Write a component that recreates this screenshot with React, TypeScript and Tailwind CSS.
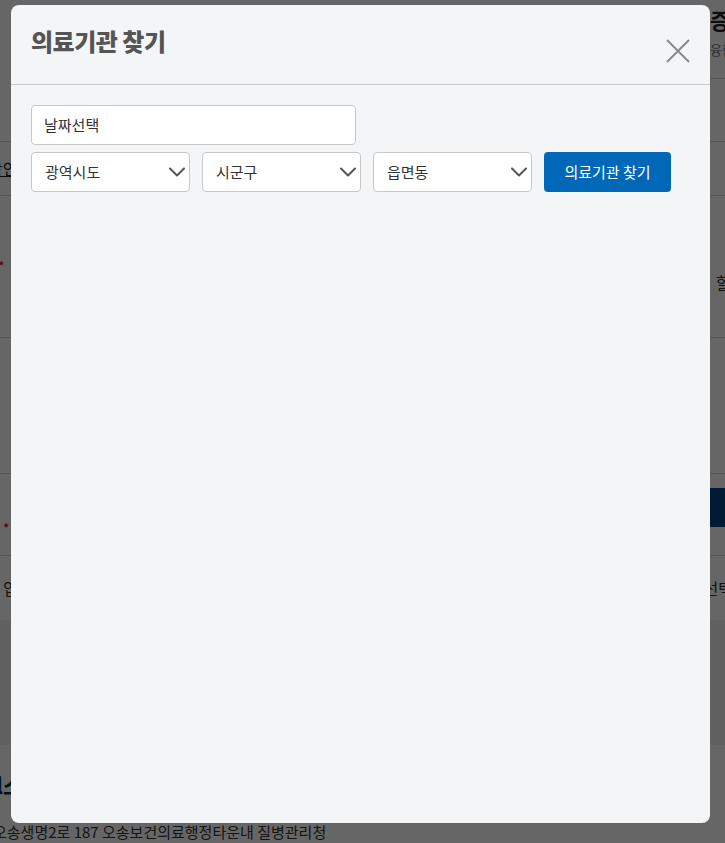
import React from 'react';

const FONT = "font-['Noto_Sans_CJK_KR','Noto_Sans',sans-serif]";

function Chevron() {
  return (
    <svg width="18" height="18" viewBox="0 0 18 18" className="shrink-0">
      <polyline points="2,5.5 9,12.5 16,5.5" fill="none" stroke="#555" strokeWidth="2" strokeLinecap="round" strokeLinejoin="round" />
    </svg>
  );
}

function Select({ label }: { label: string }) {
  return (
    <div className="w-[159px] h-10 flex items-center justify-between pl-[13px] pr-[3px] bg-white border border-[#c8c8c8] rounded-[4px] text-[15px] text-[#333]">
      <span>{label}</span>
      <Chevron />
    </div>
  );
}

/** Page behind the dimmed overlay — only its edges show */
function BackgroundPage() {
  return (
    <div className="w-full h-[843px] flex flex-col bg-white overflow-hidden">
      <div className="h-[142px] border-b border-[#d6d6d6] flex justify-end">
        <div className="flex flex-col items-start w-[15px] overflow-hidden pt-[8px]">
          <span className="text-[22px] font-bold text-[#222] leading-none whitespace-nowrap">증명</span>
          <span className="text-[13px] text-[#777] mt-[10px] whitespace-nowrap">융합</span>
          <div className="w-full border-b border-[#d6d6d6] mt-[18px]" />
        </div>
      </div>
      <div className="h-[54px] border-b border-[#d6d6d6] flex items-center">
        <span className="ml-[-12px] text-[16px] text-[#222] underline">확인</span>
      </div>
      <div className="h-[142px] border-b border-[#d6d6d6] flex justify-between overflow-hidden">
        <span className="text-[14px] text-[#d01] ml-[-2px] mt-[60px]">*</span>
        <span className="text-[17px] text-[#333] mr-[-22px] mt-[74px] whitespace-nowrap">할인</span>
      </div>
      <div className="h-[136px] border-b border-[#d6d6d6]" />
      <div className="h-[82px] border-b border-[#d6d6d6] flex justify-between">
        <span className="text-[14px] text-[#d01] ml-[3px] mt-[44px]">*</span>
        <div className="w-[20px] h-[39px] mt-[14px] bg-[#00447f]" />
      </div>
      <div className="h-[64px] flex justify-between items-center">
        <span className="text-[16px] text-[#333] ml-[-5px]">. 입</span>
        <span className="text-[16px] text-[#333] mr-[-8px]">선택</span>
      </div>
      <div className="h-[125px] bg-[#f2f2f2]" />
      <div className="flex-1 flex flex-col">
        <span className="text-[22px] font-bold text-[#0b2a4a] ml-[-4px] mt-[28px] leading-none">l소</span>
        <span className="text-[15px] text-[#333] ml-[-7px] mt-[26px] whitespace-nowrap">오송생명2로 187 오송보건의료행정타운내 질병관리청</span>
      </div>
    </div>
  );
}

export default function App() {
  return (
    <div className={`relative w-full h-[843px] overflow-hidden ${FONT}`}>
      <BackgroundPage />
      <div className="absolute inset-0 bg-black/60" />
      <div className="absolute left-[11px] top-[5px] w-[699px] h-[818px] rounded-[8px] bg-[#f4f5f7] flex flex-col overflow-hidden">
        <div className="h-[80px] shrink-0 border-b border-[#c9c9c9] flex items-center justify-between pl-[20px] pr-[20px]">
          <h2 className="text-[24px] font-black tracking-[-0.5px] text-[#555] mt-[-8px]">의료기관 찾기</h2>
          <button className="w-[24px] h-[24px] mt-[12px]" aria-label="닫기">
            <svg width="24" height="24" viewBox="0 0 24 24">
              <path d="M1 1 L23 23 M23 1 L1 23" stroke="#8a8a8a" strokeWidth="2" fill="none" />
            </svg>
          </button>
        </div>
        <div className="px-[20px] pt-[20px] flex flex-col gap-[7px]">
          <div className="w-[325px] h-10 flex items-center px-[12px] bg-white border border-[#c8c8c8] rounded-[4px] text-[15px] text-[#333]">
            날짜선택
          </div>
          <div className="flex items-center gap-[12px]">
            <Select label="광역시도" />
            <Select label="시군구" />
            <Select label="읍면동" />
            <button className="w-[127px] h-10 rounded-[4px] bg-[#0068b7] text-white text-[15px]">의료기관 찾기</button>
          </div>
        </div>
      </div>
    </div>
  );
}
